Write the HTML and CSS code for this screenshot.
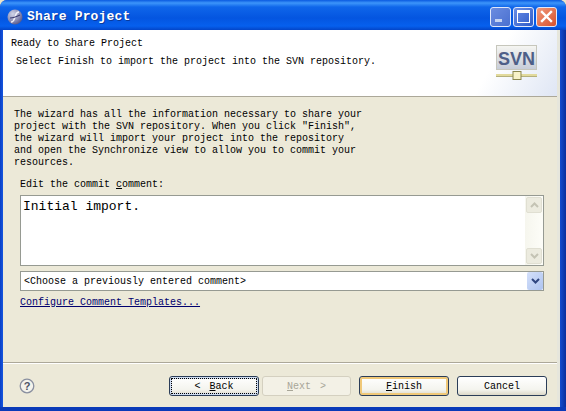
FILE: index.html
```html
<!DOCTYPE html>
<html>
<head>
    <title>Share Project</title>
    <link rel="stylesheet" href="styles.css">
</head>
<body>
    <div class="window">
        <div class="titlebar">
            <svg class="app-icon" width="16" height="16" viewBox="0 0 16 16">
                <defs>
                    <radialGradient id="orb" cx="0.35" cy="0.3" r="0.8">
                        <stop offset="0" stop-color="#d0d4e8"/>
                        <stop offset="0.6" stop-color="#8a8cb4"/>
                        <stop offset="1" stop-color="#4a4c80"/>
                    </radialGradient>
                </defs>
                <circle cx="8" cy="8" r="7.5" fill="url(#orb)"/>
                <path d="M12 3 C9 3 9 5 8 8 C7 11 7 13 4 13" stroke="#f0f0f8" stroke-width="1.5" fill="none"/>
                <path d="M3 9 C6 9 9 8 13 6" stroke="#3a3b70" stroke-width="1.1" fill="none"/>
            </svg>
            <span class="title">Share Project</span>
            <div class="win-buttons">
                <div class="win-btn win-min"><span class="min-bar"></span></div>
                <div class="win-btn win-max"><span class="max-box"></span></div>
                <div class="win-btn win-close">
                    <svg width="13" height="13" viewBox="0 0 13 13">
                        <path d="M2 2 L11 11 M11 2 L2 11" stroke="#fff" stroke-width="2.4" stroke-linecap="square"/>
                    </svg>
                </div>
            </div>
        </div>

        <div class="client">
            <div class="banner">
                <div class="banner-text">
                    <div class="banner-title">Ready to Share Project</div>
                    <div class="banner-desc">Select Finish to import the project into the SVN repository.</div>
                </div>
                <svg class="svn-logo" width="44" height="44" viewBox="0 0 44 44">
                    <defs>
                        <linearGradient id="plate" x1="0" y1="0" x2="0" y2="1">
                            <stop offset="0" stop-color="#f6f6f2"/>
                            <stop offset="1" stop-color="#c6ccd8"/>
                        </linearGradient>
                    </defs>
                    <rect x="1.5" y="0.5" width="40" height="24" fill="url(#plate)" stroke="#c6c6bc"/>
                    <text x="21.5" y="20" class="svn-text">SVN</text>
                    <rect x="1" y="29" width="41" height="2" fill="#e2da9c"/>
                    <rect x="1" y="31" width="41" height="1" fill="#b4b07c"/>
                    <rect x="18" y="26.5" width="8" height="8" fill="#f8f2c8" stroke="#8c8850"/>
                </svg>
            </div>

            <div class="page">
                <div class="intro">
                    The wizard has all the information necessary to share your<br>
                    project with the SVN repository. When you click "Finish",<br>
                    the wizard will import your project into the repository<br>
                    and open the Synchronize view to allow you to commit your<br>
                    resources.
                </div>

                <div class="form">
                    <label class="comment-label">Edit the commit <u>c</u>omment:</label>
                    <div class="comment-box">
                        <div class="comment-text">Initial import.</div>
                        <div class="scrollbar">
                            <div class="scroll-btn">
                                <svg width="9" height="6" viewBox="0 0 9 6"><path d="M1 5 L4.5 1.5 L8 5" stroke="#c4c3b4" stroke-width="2" fill="none"/></svg>
                            </div>
                            <div class="scroll-btn">
                                <svg width="9" height="6" viewBox="0 0 9 6"><path d="M1 1 L4.5 4.5 L8 1" stroke="#c4c3b4" stroke-width="2" fill="none"/></svg>
                            </div>
                        </div>
                    </div>
                    <div class="combo">
                        <span class="combo-text">&lt;Choose a previously entered comment&gt;</span>
                        <div class="combo-btn">
                            <svg width="9" height="6" viewBox="0 0 9 6"><path d="M1 1 L4.5 4.5 L8 1" stroke="#2f4680" stroke-width="2" fill="none"/></svg>
                        </div>
                    </div>
                    <a class="templates-link" href="#">Configure Comment Templates...</a>
                </div>
            </div>

            <div class="footer">
                <svg class="help-icon" width="16" height="16" viewBox="0 0 16 16">
                    <circle cx="8" cy="8" r="6.8" fill="#f4f3ec" stroke="#8a90a0" stroke-width="1.3"/>
                    <text x="8" y="12" class="help-mark">?</text>
                </svg>
                <div class="nav-buttons">
                    <button class="btn btn-focus">&lt; <u>B</u>ack</button>
                    <button class="btn btn-disabled" disabled><u>N</u>ext &gt;</button>
                    <button class="btn btn-default"><u>F</u>inish</button>
                    <button class="btn">Cancel</button>
                </div>
            </div>
        </div>
    </div>
</body>
</html>
```

FILE: styles.css
```css
* {
    margin: 0;
    padding: 0;
    box-sizing: border-box;
}

body {
    width: 566px;
    height: 411px;
    overflow: hidden;
    background: #ece4c8;
    font-family: "Liberation Mono", monospace;
    font-size: 10px;
    color: #000;
}

.window {
    width: 566px;
    height: 411px;
    display: flex;
    flex-direction: column;
    padding: 0 6px 0 3px;
    background: linear-gradient(90deg, #0a3fc4 0, #1556e0 3px, #1556e0 558px, #0a2f9c 566px);
    border-bottom: 4px solid #0a3ab8;
    border-radius: 7px 7px 0 0;
}

.titlebar {
    height: 30px;
    flex: none;
    margin: 0 -6px 0 -3px;
    padding: 3px 9px 0 7px;
    display: flex;
    align-items: center;
    border-radius: 7px 7px 0 0;
    background: linear-gradient(180deg, #0a5ae0 0, #3d95fa 3px, #0f66ea 7px, #0455e0 18px, #0660ee 26px, #0345c8 30px);
}

.app-icon {
    flex: none;
}

.title {
    margin-left: 4px;
    font-size: 13px;
    font-weight: bold;
    letter-spacing: 0.15px;
    color: #fff;
    text-shadow: 1px 1px 0 #0a3a9c;
}

.win-buttons {
    margin-left: auto;
    display: flex;
    gap: 2px;
}

.win-btn {
    width: 21px;
    height: 20px;
    display: flex;
    align-items: center;
    justify-content: center;
    border: 1px solid #dfe8fb;
    border-radius: 3px;
    background: linear-gradient(135deg, #6a8ee6, #2f5cc8);
}

.win-min {
    align-items: flex-end;
    justify-content: flex-start;
    padding: 0 0 4px 4px;
    background: linear-gradient(135deg, #6a8ce0, #4a70d0);
}

.min-bar {
    width: 7px;
    height: 3px;
    background: #c5d4f2;
}

.max-box {
    width: 13px;
    height: 13px;
    border: 1px solid #fff;
    border-top-width: 3px;
}

.win-close {
    background: linear-gradient(135deg, #f09a7c, #d8502c);
}

.client {
    flex: 1;
    display: flex;
    flex-direction: column;
    min-height: 0;
    background: #ece9d8;
    border-right: 3px solid #e6e6dc;
}

.banner {
    height: 67px;
    flex: none;
    display: flex;
    justify-content: space-between;
    background: linear-gradient(120deg, #fff 86%, #dfe6f4 100%);
    border-bottom: 1px solid #aca899;
}

.banner-text {
    padding: 7px 0 0 8px;
}

.banner-title {
    line-height: 13px;
}

.banner-desc {
    margin: 5px 0 0 5px;
    line-height: 13px;
}

.svn-logo {
    margin: 15px 18px 0 0;
}

.svn-text {
    font-family: "Liberation Sans", sans-serif;
    font-size: 18px;
    font-weight: bold;
    text-anchor: middle;
    fill: #4e5f88;
}

.page {
    flex: 1;
    padding: 12px 13px 0 11px;
}

.intro {
    line-height: 12px;
}

.form {
    margin: 9px 0 0 6px;
}

.comment-label {
    display: block;
    line-height: 13px;
}

.comment-box {
    height: 71px;
    margin-top: 4px;
    display: flex;
    background: #fff;
    border: 1px solid #969a92;
}

.comment-text {
    flex: 1;
    padding: 3px 2px;
    font-size: 13px;
    line-height: 15px;
}

.scrollbar {
    width: 18px;
    display: flex;
    flex-direction: column;
    justify-content: space-between;
    padding: 1px;
    background: linear-gradient(90deg, #f6f6ee, #fdfdf8);
}

.scroll-btn {
    height: 16px;
    display: flex;
    align-items: center;
    justify-content: center;
    background: #ecebdf;
    border: 1px solid #e0dfd2;
    border-radius: 2px;
}

.combo {
    height: 20px;
    margin-top: 5px;
    display: flex;
    align-items: center;
    background: #fff;
    border: 1px solid #969a92;
    padding-left: 3px;
}

.combo-text {
    flex: 1;
}

.combo-btn {
    width: 16px;
    height: 18px;
    display: flex;
    align-items: center;
    justify-content: center;
    background: linear-gradient(135deg, #d4e0fa, #aec4f0);
    border-radius: 2px;
}

.templates-link {
    display: inline-block;
    margin-top: 5px;
    line-height: 13px;
    color: #00006e;
}

.footer {
    height: 45px;
    flex: none;
    display: flex;
    align-items: flex-start;
    padding: 13px 0 0 16px;
    border-top: 1px solid #aca899;
    box-shadow: inset 0 1px 0 #fff;
}

.help-icon {
    margin-top: 2px;
}

.help-mark {
    font-family: "Liberation Sans", sans-serif;
    font-size: 11px;
    font-weight: bold;
    text-anchor: middle;
    fill: #4c5466;
}

.nav-buttons {
    margin-left: 134px;
    display: flex;
}

.btn {
    width: 90px;
    height: 20px;
    margin-left: 8px;
    padding-top: 1px;
    font-family: "Liberation Mono", monospace;
    font-size: 10px;
    color: #000;
    border: 1px solid #2b3d58;
    border-radius: 3px;
    background: linear-gradient(180deg, #fff 0, #f4f4ee 70%, #dcd8c8 100%);
}

.btn-focus {
    margin-left: 0;
    word-spacing: 3px;
    outline: 1px dotted #000;
    outline-offset: -3px;
    box-shadow: inset 0 0 0 2px #cfdcf0;
}

.btn-disabled {
    width: 89px;
    margin-left: 3px;
    word-spacing: 3px;
    color: #a8a698;
    border-color: #d4d0c0;
    background: #f3f1e6;
}

.btn-default {
    box-shadow: inset 0 0 0 2px #f0c878;
}
```
